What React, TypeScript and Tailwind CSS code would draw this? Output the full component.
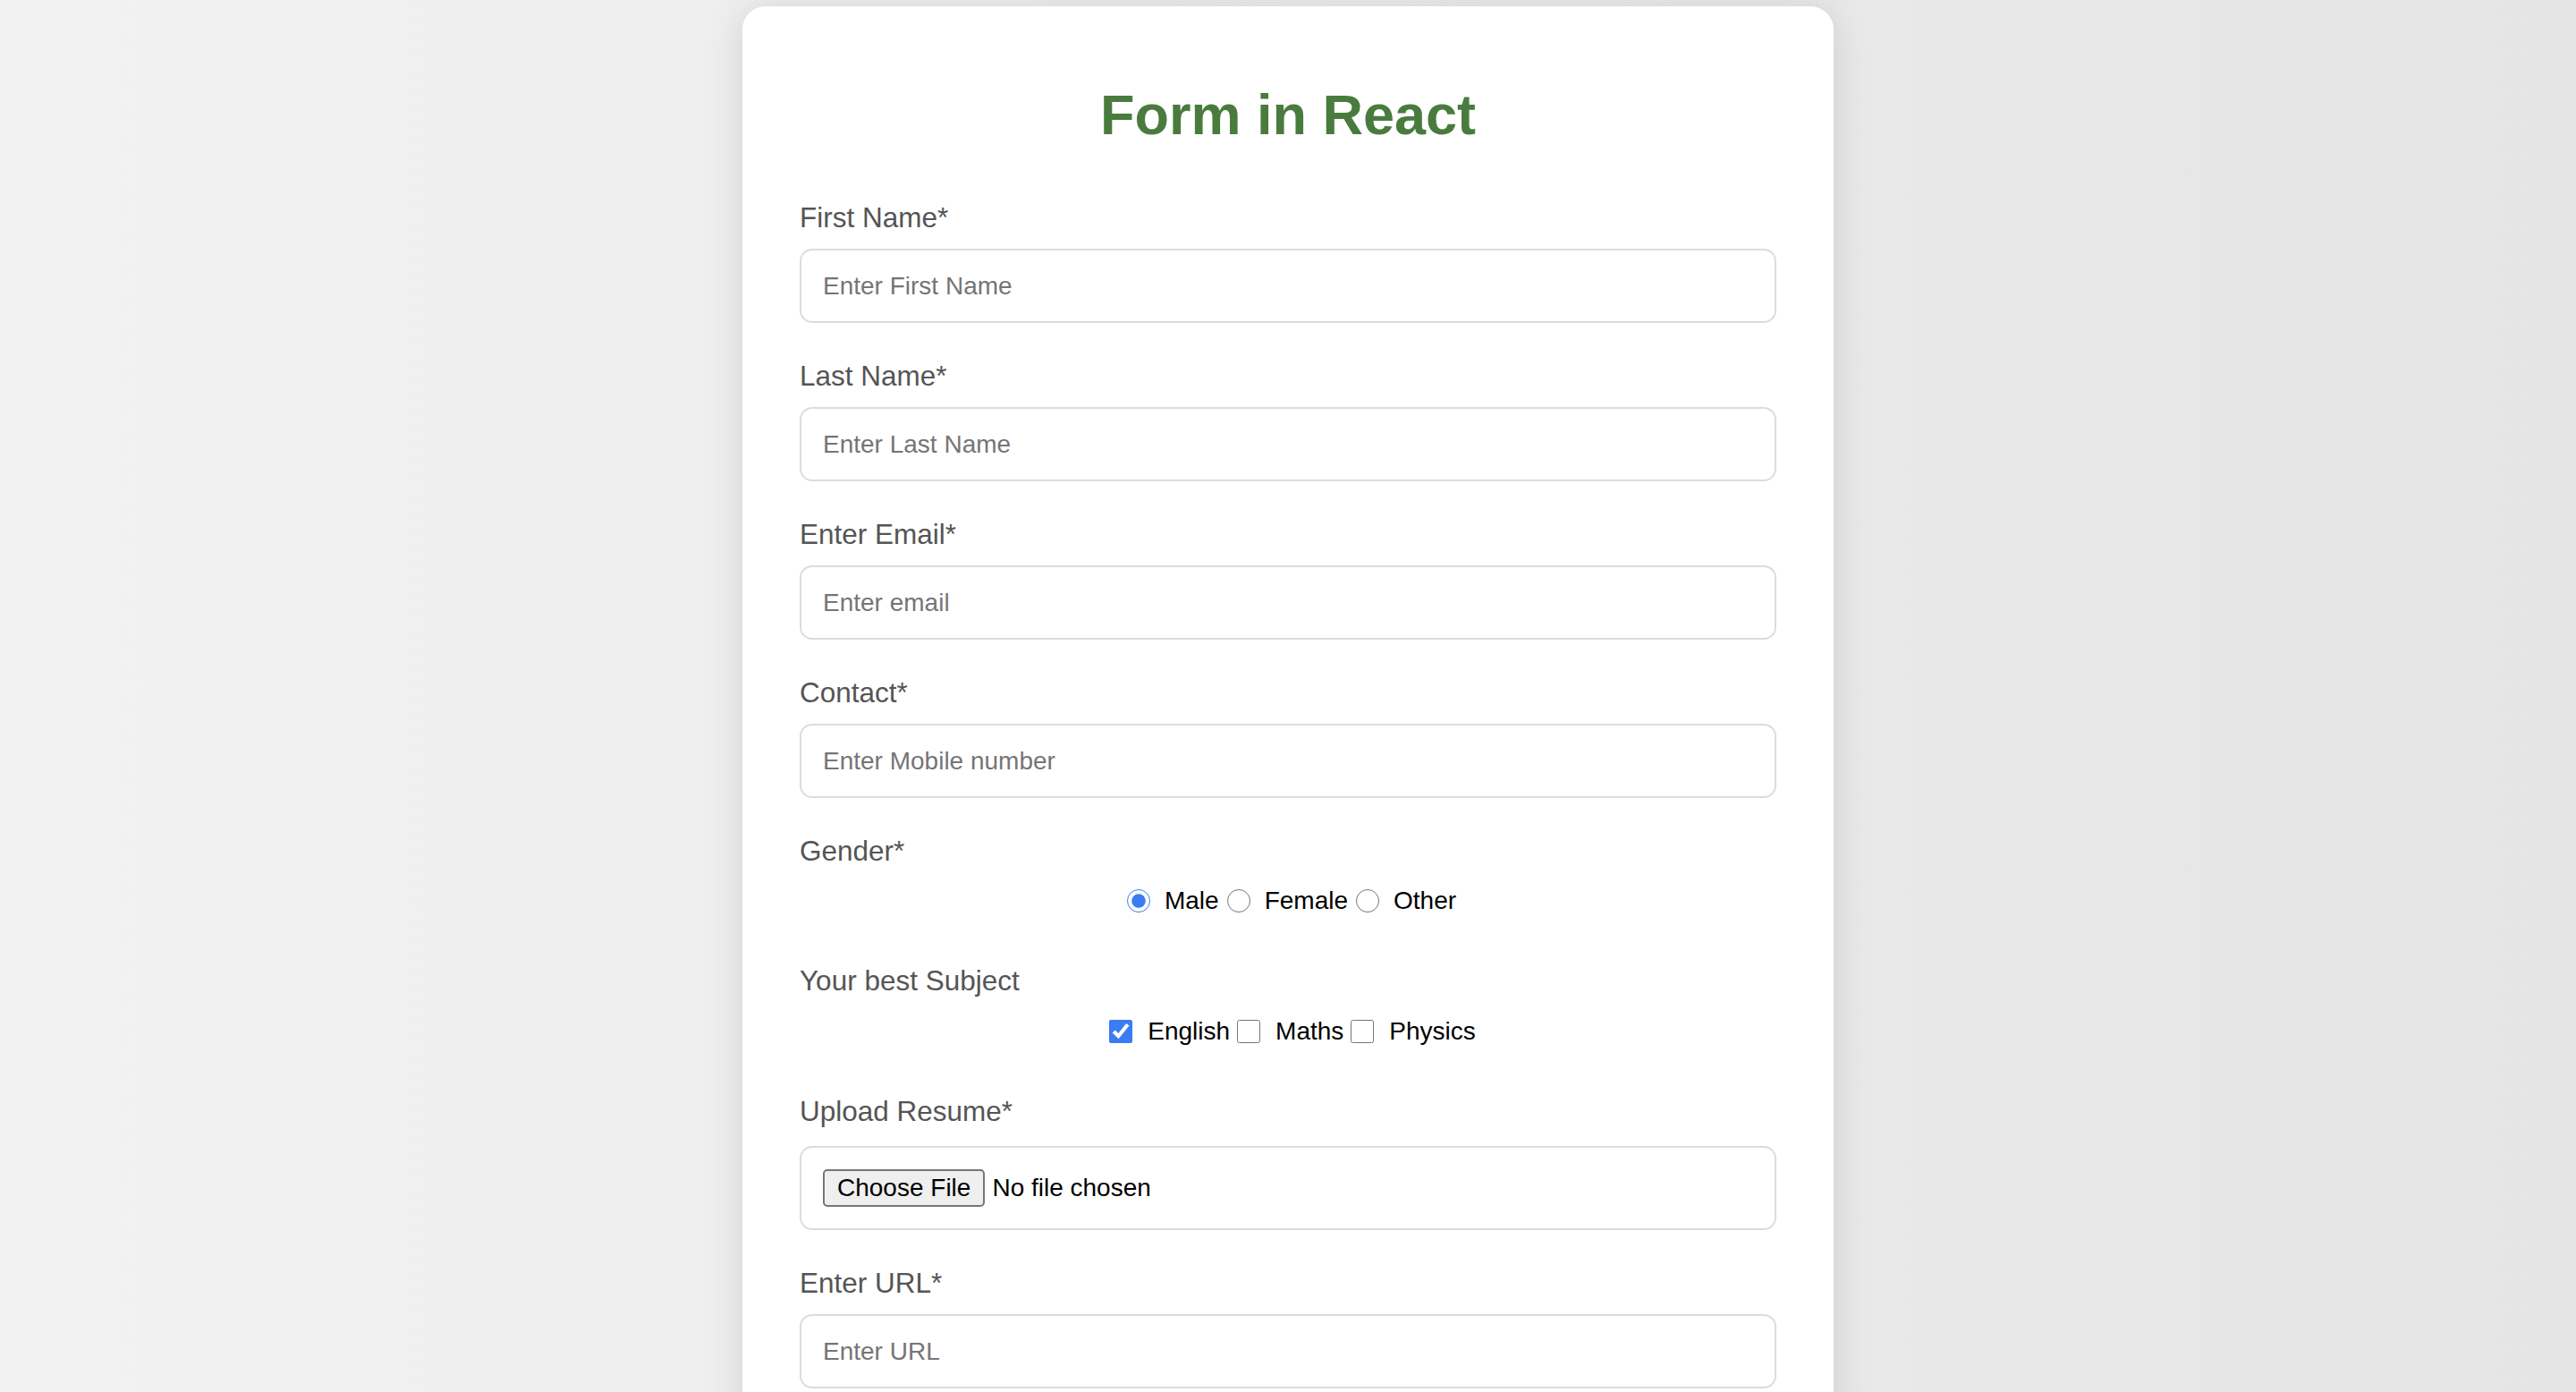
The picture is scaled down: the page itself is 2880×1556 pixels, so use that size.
import React, { useState } from 'react';

type Field = { label: string; placeholder: string; type: string };

const textFields: Field[] = [
  { label: 'First Name*', placeholder: 'Enter First Name', type: 'text' },
  { label: 'Last Name*', placeholder: 'Enter Last Name', type: 'text' },
  { label: 'Enter Email*', placeholder: 'Enter email', type: 'email' },
  { label: 'Contact*', placeholder: 'Enter Mobile number', type: 'tel' },
];

const inputCls =
  'block w-full h-[83px] border-2 border-[#dcdcdc] rounded-[14px] px-[24px] text-[28px] text-black placeholder:text-[#757575] outline-none bg-white';
const labelCls = 'block text-[31.5px] leading-[36px] text-[#555555]';

const App: React.FC = () => {
  const [gender, setGender] = useState('male');
  const [subjects, setSubjects] = useState<Record<string, boolean>>({ english: true, maths: false, physics: false });

  return (
    <div className="min-h-screen w-full bg-linear-to-r from-[#f2f2f2] to-[#e5e5e5] flex justify-center pt-[7px] font-['Liberation_Sans',Arial,sans-serif]">
      <div className="w-[1220px] bg-white rounded-[26px] shadow-[0_4px_40px_rgba(0,0,0,0.12)] px-[64px] pt-[85px] pb-[60px]">
        <h1 className="text-center text-[63px] leading-[72px] font-bold text-[#4a7b3e]">Form in React</h1>

        <form className="mt-[61px]" onSubmit={(e) => e.preventDefault()}>
          {textFields.map((f) => (
            <div key={f.label} className="mb-[41px]">
              <label className={labelCls}>{f.label}</label>
              <input type={f.type} placeholder={f.placeholder} className={`${inputCls} mt-[17px]`} />
            </div>
          ))}

          {/* Gender */}
          <label className={labelCls}>Gender*</label>
          <div className="mt-[22px] flex items-center justify-center pl-2 text-[28px] leading-[32px] text-black">
            {[
              ['male', 'Male'],
              ['female', 'Female'],
              ['other', 'Other'],
            ].map(([v, t], i) => (
              <label key={v} className={`flex items-center ${i > 0 ? 'ml-[9px]' : ''}`}>
                <input
                  type="radio"
                  name="gender"
                  checked={gender === v}
                  onChange={() => setGender(v)}
                  className="w-[26px] h-[26px] m-0 accent-[#3b7cf5]"
                />
                <span className="ml-[16px]">{t}</span>
              </label>
            ))}
          </div>

          {/* Subjects */}
          <label className={`${labelCls} mt-[55px]`}>Your best Subject</label>
          <div className="mt-[23px] flex items-center justify-center pl-[10px] text-[28px] leading-[32px] text-black">
            {[
              ['english', 'English'],
              ['maths', 'Maths'],
              ['physics', 'Physics'],
            ].map(([v, t], i) => (
              <label key={v} className={`flex items-center ${i > 0 ? 'ml-[8px]' : ''}`}>
                <input
                  type="checkbox"
                  checked={subjects[v]}
                  onChange={() => setSubjects({ ...subjects, [v]: !subjects[v] })}
                  className="w-[26px] h-[26px] m-0 accent-[#3b7cf5]"
                />
                <span className="ml-[17px]">{t}</span>
              </label>
            ))}
          </div>

          {/* Resume */}
          <label className={`${labelCls} mt-[55px]`}>Upload Resume*</label>
          <div className="mt-[21px] h-[94px] border-2 border-[#dcdcdc] rounded-[14px] px-[24px] flex items-center text-[28px] text-black">
            <button
              type="button"
              className="h-[42px] px-[14px] bg-[#efefef] border-2 border-[#767676] rounded-[5px] text-[28px] leading-none text-black"
            >
              Choose File
            </button>
            <span className="ml-[8px]">No file chosen</span>
          </div>

          {/* URL */}
          <label className={`${labelCls} mt-[41px]`}>Enter URL*</label>
          <input type="url" placeholder="Enter URL" className={`${inputCls} mt-[17px] h-[82px]`} />
        </form>
      </div>
    </div>
  );
};

export default App;
